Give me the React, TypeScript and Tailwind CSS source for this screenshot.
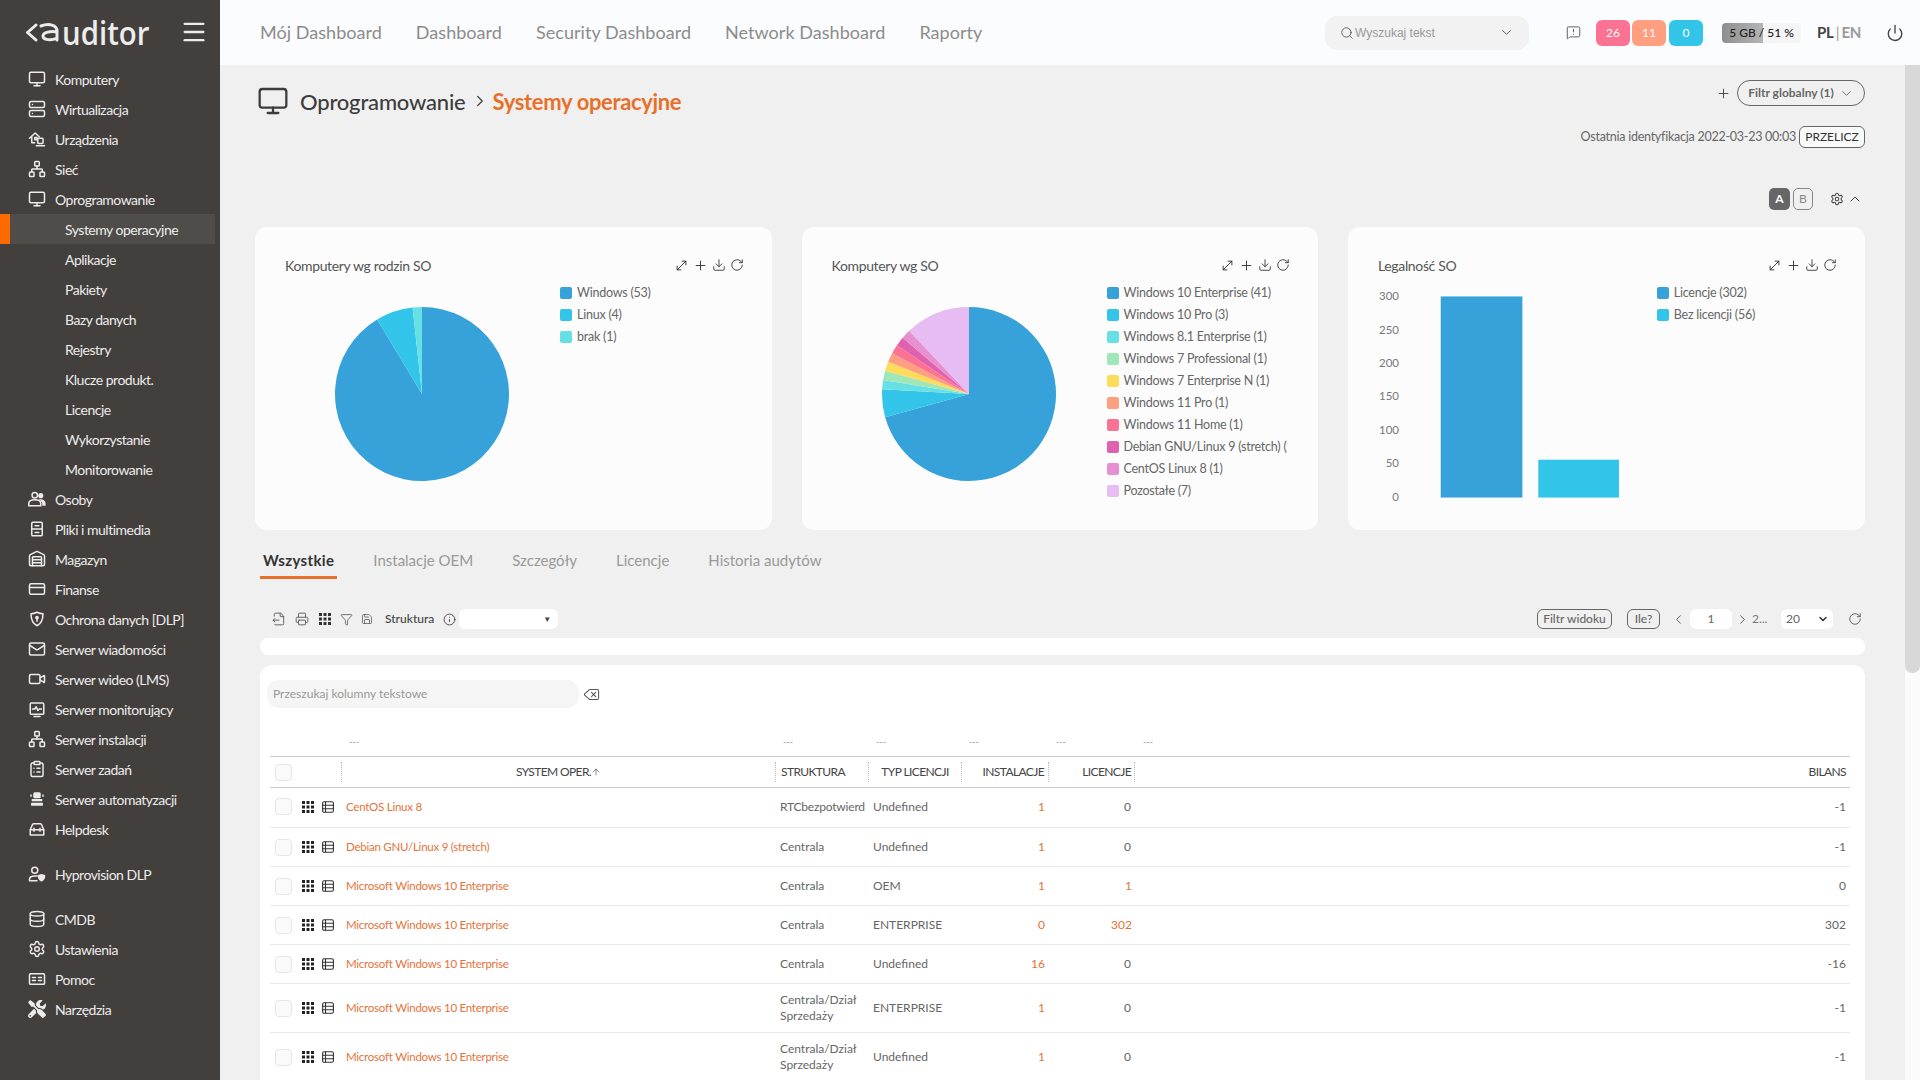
import React from "react";
import {
  Monitor, Server, Network, Warehouse, CreditCard, Mail, Video, ClipboardList, Database, Settings,
  Search, ChevronDown, ChevronUp, ChevronLeft, ChevronRight, Plus, Power, MessageSquareWarning,
  MoveDiagonal, Download, RotateCw, FileOutput, Printer, Funnel, Save, Info, Delete, ArrowUp, Menu,
} from "lucide-react";
import { FaTools } from "react-icons/fa";

type P = { className?: string };
const base = { viewBox: "0 0 24 24", fill: "none", stroke: "currentColor", strokeWidth: 2, strokeLinecap: "round" as const, strokeLinejoin: "round" as const };

const HouseDev = ({ className }: P) => (
  <svg {...base} className={className}><path d="M2 11 9.5 4 15 9" /><path d="M5 9v8h4" /><path d="M9 10h3v3H9z" /><rect x="13" y="11" width="7" height="7" rx="1" /><path d="M11 21h11" /></svg>
);
const Users = ({ className }: P) => (
  <svg viewBox="0 0 24 24" className={className} fill="currentColor"><circle cx="9" cy="7" r="3.6" fill="none" stroke="currentColor" strokeWidth="2" /><circle cx="17" cy="7.5" r="3.4" /><path d="M1 21v-3c0-3 3-5 8-5s8 2 8 5v3z" fill="none" stroke="currentColor" strokeWidth="2" /><path d="M14 12.5c5-1 9 1 9.5 5V21H19v-3c0-2-2-4-5-5.500z" /></svg>
);
const Cabinet = ({ className }: P) => (
  <svg {...base} className={className}><rect x="5" y="3" width="14" height="18" rx="1.500" /><path d="M5 12h14M9.500 7.500h5M9.500 16.500h5" /></svg>
);
const Shield = ({ className }: P) => (
  <svg {...base} className={className}><path d="M12 3c3 1.500 5 2 8 2 0 8-2 13-8 16-6-3-8-8-8-16 3 0 5-.5 8-2z" /><circle cx="12" cy="10" r="1.500" fill="currentColor" /><path d="M12 11v4" /></svg>
);
const MonPulse = ({ className }: P) => (
  <svg {...base} className={className}><rect x="3" y="4" width="18" height="15" rx="1.500" /><path d="M6 12h3l2-3 2 5 2-2h3" /><path d="M8 22h8" /></svg>
);
const Bot = ({ className }: P) => (
  <svg viewBox="0 0 24 24" className={className} fill="currentColor"><rect x="7" y="3" width="10" height="8" rx="2" /><rect x="5" y="12" width="14" height="3" /><rect x="4" y="17" width="16" height="4" rx="1" /><rect x="3" y="6" width="2" height="3" /><rect x="19" y="6" width="2" height="3" /></svg>
);
const Help = ({ className }: P) => (
  <svg {...base} className={className}><path d="M3 20v-7l3-7c.3-.7 1-1 2-1h8c1 0 1.700.3 2 1l3 7v7z" /><path d="M3 13h18M8 11v4M16 11v4" /></svg>
);
const UserShield = ({ className }: P) => (
  <svg {...base} className={className}><circle cx="9" cy="7" r="4" /><path d="M2 21v-2c0-3 3-4.500 7-4.500 1 0 2 .1 3 .3M2 21h10" /><path d="M18 13c1.500.8 2.500 1 4 1 0 3.500-1.500 6-4 7-2.500-1-4-3.500-4-7 1.500 0 2.500-.2 4-1z" fill="currentColor" /></svg>
);
const Panel = ({ className }: P) => (
  <svg {...base} className={className}><rect x="2" y="5" width="20" height="14" rx="1.500" /><path d="M6 10h4M6 14h4M14 10h4M14 14h4" /></svg>
);
const Tools = ({ className }: P) => <FaTools className={className} />;

const GridDots = ({ className }: P) => (
  <svg viewBox="0 0 12 12" className={className} fill="currentColor">
    {[0, 4.500, 9].map((x) => [0, 4.500, 9].map((y) => <rect key={`${x}-${y}`} x={x} y={y} width="3" height="3" />))}
  </svg>
);
const ListBox = ({ className }: P) => (
  <svg viewBox="0 0 12 12" className={className} fill="none" stroke="currentColor" strokeWidth="1.100"><rect x=".6" y=".8" width="10.800" height="10.400" rx="1.500" /><path d="M.6 4.200h10.800M.6 7.700h10.800M3.500 .8v10.400" /></svg>
);

const menuTop: [React.ComponentType<P>, string][] = [
  [Monitor, "Komputery"], [Server, "Wirtualizacja"], [HouseDev, "Urządzenia"], [Network, "Sieć"], [Monitor, "Oprogramowanie"],
];
const sub = ["Systemy operacyjne", "Aplikacje", "Pakiety", "Bazy danych", "Rejestry", "Klucze produkt.", "Licencje", "Wykorzystanie", "Monitorowanie"];
const menuMid: [React.ComponentType<P>, string][] = [
  [Users, "Osoby"], [Cabinet, "Pliki i multimedia"], [Warehouse, "Magazyn"], [CreditCard, "Finanse"], [Shield, "Ochrona danych [DLP]"],
  [Mail, "Serwer wiadomości"], [Video, "Serwer wideo (LMS)"], [MonPulse, "Serwer monitorujący"], [Network, "Serwer instalacji"],
  [ClipboardList, "Serwer zadań"], [Bot, "Serwer automatyzacji"], [Help, "Helpdesk"],
];
const menuEnd: [React.ComponentType<P>, string][] = [
  [Database, "CMDB"], [Settings, "Ustawienia"], [Panel, "Pomoc"], [Tools, "Narzędzia"],
];

function Item({ icon: I, label }: { icon: React.ComponentType<P>; label: string }) {
  return (
    <div className="flex h-[30px] items-center pl-[28px] text-[14px] tracking-[-0.5px] text-[#ececec]">
      <I className="h-[18px] w-[18px] shrink-0" />
      <span className="ml-[9px]">{label}</span>
    </div>
  );
}

function Sidebar() {
  return (
    <aside className="flex w-[220px] shrink-0 flex-col bg-[#433f3c]">
      <div className="flex h-[64px] items-center pl-[25px] pr-[12px]">
        <svg viewBox="0 0 34 19" className="h-[19px] w-[34px] text-[#ececec]" fill="none" stroke="currentColor" strokeWidth="3" strokeLinecap="round" strokeLinejoin="round">
          <path d="M11 2 2.500 9.500 11 17" />
          <path d="M16 3C24 0 32 2 32 8V17M32 9C26 8 18 9 18 13C18 17 26 18 32 15" />
        </svg>
        <span className="ml-[3px] block w-[88px] origin-left scale-x-[0.89] whitespace-nowrap text-[33px] font-semibold leading-none text-[#ececec] [font-family:'Open_Sans',Lato,sans-serif]">uditor</span>
        <Menu className="ml-auto h-[28px] w-[28px] text-[#ececec]" strokeWidth={2} />
      </div>
      <nav>
        {menuTop.map(([i, l]) => <Item key={l} icon={i} label={l} />)}
        {sub.map((s, idx) => (
          <div key={s} className={idx === 0 ? "flex h-[30px] w-[215px] items-center border-l-[10px] border-[#ff6a00] bg-[#504c49] pl-[55px] text-[14px] tracking-[-0.5px] text-[#ececec]" : "flex h-[30px] items-center pl-[65px] text-[14px] tracking-[-0.5px] text-[#ececec]"}>{s}</div>
        ))}
        {menuMid.map(([i, l]) => <Item key={l} icon={i} label={l} />)}
        <div className="mt-[15px]"><Item icon={UserShield} label="Hyprovision DLP" /></div>
        <div className="mt-[15px]">{menuEnd.map(([i, l]) => <Item key={l} icon={i} label={l} />)}</div>
      </nav>
    </aside>
  );
}

function TopBar() {
  return (
    <header className="flex h-[65px] shrink-0 items-center bg-[#fbfcfd] pl-[40px] pr-[16px]">
      <nav className="flex gap-[34px] text-[18px] tracking-[0.04px] text-[#8c8c8c]">
        <span>Mój Dashboard</span><span>Dashboard</span><span>Security Dashboard</span><span>Network Dashboard</span><span>Raporty</span>
      </nav>
      <div className="ml-auto flex h-[34px] w-[204px] items-center rounded-[12px] bg-[#f2f2f2] pl-[15px] pr-[15px]">
        <Search className="h-[14px] w-[14px] text-[#555]" strokeWidth={1.500} />
        <span className="ml-[1px] text-[12px] text-[#999] [font-family:'Liberation_Sans',sans-serif]">Wyszukaj tekst</span>
        <ChevronDown className="ml-auto h-[15px] w-[15px] text-[#555]" strokeWidth={1.500} />
      </div>
      <MessageSquareWarning className="ml-[37px] h-[15px] w-[15px] text-[#555]" strokeWidth={1.500} />
      <div className="ml-[15px] flex gap-[2px] text-[12px] text-white">
        <span className="flex h-[26px] w-[34px] items-center justify-center rounded-[6px] bg-[#fb7293]">26</span>
        <span className="flex h-[26px] w-[34px] items-center justify-center rounded-[6px] bg-[#ff9f7f]">11</span>
        <span className="ml-[1px] flex h-[26px] w-[34px] items-center justify-center rounded-[6px] bg-[#32c5e9]">0</span>
      </div>
      <div className="relative ml-[19px] h-[20px] w-[79px] overflow-hidden rounded-[4px] bg-[#f5f5f5]">
        <div className="h-full w-[41px] bg-gradient-to-r from-[#8f8f8f] to-[#b5b5b5]" />
        <span className="absolute inset-0 flex items-center justify-center text-[12px] font-medium text-[#222]">5 GB / 51 %</span>
      </div>
      <div className="ml-[16px] flex w-[44px] justify-between text-[15px] font-bold tracking-[-0.3px] text-[#444]">PL<span className="font-normal text-[#999]">|</span><span className="text-[#999]">EN</span></div>
      <Power className="ml-[25px] h-[18px] w-[18px] text-[#444]" strokeWidth={1.800} />
    </header>
  );
}

const COLORS = ["#37a2da", "#32c5e9", "#67e0e3", "#9fe6b8", "#ffdb5c", "#ff9f7f", "#fb7293", "#e062ae", "#e690d1", "#e7bcf3"];

function Pie({ values }: { values: number[] }) {
  const total = values.reduce((a, b) => a + b, 0);
  const R = 87;
  let acc = 0;
  return (
    <svg width={174} height={174} viewBox="0 0 174 174">
      {values.map((v, i) => {
        const a0 = (acc / total) * 2 * Math.PI;
        acc += v;
        const a1 = (acc / total) * 2 * Math.PI;
        const p = (a: number) => `${(R + R * Math.sin(a)).toFixed(2)} ${(R - R * Math.cos(a)).toFixed(2)}`;
        return <path key={i} d={`M${R} ${R}L${p(a0)}A${R} ${R} 0 ${a1 - a0 > Math.PI ? 1 : 0} 1 ${p(a1)}Z`} fill={COLORS[i]} />;
      })}
    </svg>
  );
}

function Legend({ items }: { items: string[] }) {
  return (
    <div className="w-[181px] overflow-hidden pt-[1px]">
      {items.map((t, i) => (
        <div key={t} className="flex h-[22px] items-center whitespace-nowrap text-[12.500px] tracking-[-0.23px] text-[#666]">
          <span className="mr-[5px] h-[12px] w-[12px] shrink-0 rounded-[2px]" style={{ background: COLORS[i] }} />
          {t}
        </div>
      ))}
    </div>
  );
}

function CardIcons() {
  return (
    <div className="flex items-center gap-[4px] text-[#333]">
      <MoveDiagonal className="h-[15px] w-[15px]" strokeWidth={1.500} />
      <Plus className="h-[15px] w-[15px]" strokeWidth={1.500} />
      <Download className="h-[14px] w-[14px]" strokeWidth={1.500} />
      <RotateCw className="h-[14px] w-[14px]" strokeWidth={1.500} />
    </div>
  );
}

function Card({ title, children }: { title: string; children: React.ReactNode }) {
  return (
    <section className="h-[303px] w-[517px] rounded-[12px] bg-[#fcfcfc] pl-[30px] pr-[28px] pt-[28px]">
      <div className="flex h-[20px] items-center justify-between">
        <h3 className="text-[14px] tracking-[-0.35px] text-[#555]">{title}</h3>
        <CardIcons />
      </div>
      <div className="mt-[6px] flex">{children}</div>
    </section>
  );
}

function Bars() {
  const labels = ["300", "250", "200", "150", "100", "50", "0"];
  return (
    <svg width={280} height={230} viewBox="0 0 280 230">
      {labels.map((l, i) => (
        <text key={l} x={21} y={19 + i * 33.5} textAnchor="end" fontSize="11.500" fill="#777" fontFamily="Lato">{l}</text>
      ))}
      <rect x={63} y={15} width={82} height={202} fill="#37a2da" />
      <rect x={161} y={179} width={81} height={38} fill="#32c5e9" />
    </svg>
  );
}

const rows = [
  ["CentOS Linux 8", "RTCbezpotwierdzony", "Undefined", "1", "0", "-1", 40],
  ["Debian GNU/Linux 9 (stretch)", "Centrala", "Undefined", "1", "0", "-1", 39],
  ["Microsoft Windows 10 Enterprise", "Centrala", "OEM", "1", "1", "0", 39],
  ["Microsoft Windows 10 Enterprise", "Centrala", "ENTERPRISE", "0", "302", "302", 39],
  ["Microsoft Windows 10 Enterprise", "Centrala", "Undefined", "16", "0", "-16", 39],
  ["Microsoft Windows 10 Enterprise", "Centrala/Dział Sprzedaży", "ENTERPRISE", "1", "0", "-1", 49],
  ["Microsoft Windows 10 Enterprise", "Centrala/Dział Sprzedaży", "Undefined", "1", "0", "-1", 49],
] as const;

const cols = "grid grid-cols-[71px_434px_93px_93px_87px_87px_1fr]";
const Check = () => <span className="ml-[5px] block h-[17px] w-[17px] rounded-[4px] border border-[#e6e6e6] bg-[#fafafa]" />;

function Table() {
  return (
    <div className="ml-[10px] mr-[15px] text-[12px]">
      <div className={`${cols} h-[48px] pt-[28px] text-[9px] leading-[12px] text-[#999]`}>
        <span />
        <span className="pl-[8px]">---</span><span className="pl-[8px]">---</span><span className="pl-[8px]">---</span><span className="pl-[8px]">---</span><span className="pl-[8px]">---</span><span className="pl-[8px]">---</span>
      </div>
      <div className={`${cols} h-[32px] items-center border-y border-[#cccccc] tracking-[-0.6px] text-[#444]`}>
        <div><Check /></div>
        <div className="flex h-[20px] items-center justify-center border-l border-dotted border-[#bbb]">SYSTEM OPER.<ArrowUp className="h-[10px] w-[10px]" strokeWidth={1.500} /></div>
        <div className="flex h-[20px] items-center border-l border-dotted border-[#bbb] pl-[5px]">STRUKTURA</div>
        <div className="flex h-[20px] items-center justify-center border-l border-dotted border-[#bbb]">TYP LICENCJI</div>
        <div className="flex h-[20px] items-center justify-end border-l border-dotted border-[#bbb] pr-[4px]">INSTALACJE</div>
        <div className="flex h-[20px] items-center justify-end border-x border-dotted border-[#bbb] pr-[3px]">LICENCJE</div>
        <div className="pr-[4px] text-right">BILANS</div>
      </div>
      {rows.map((r, i) => (
        <div key={i} className={`${cols} items-center border-b border-[#e8e8e8] text-[#666] ${i === 0 ? "pb-[2px]" : ""}`} style={{ height: r[6] }}>
          <div className="flex items-center">
            <Check />
            <GridDots className="ml-[10px] h-[12px] w-[12px] text-[#222]" />
            <ListBox className="ml-[8px] h-[12px] w-[12px] text-[#333]" />
          </div>
          <div className="pl-[5px] text-[11.500px] tracking-[-0.25px] text-[#e4733a]">{r[0]}</div>
          <div className="overflow-hidden pl-[5px] pr-[3px] leading-[16px]">{r[1].startsWith("RTC") ? <span className="block w-[85px] overflow-hidden whitespace-nowrap tracking-[-0.2px]">{r[1]}</span> : r[1]}</div>
          <div className="pl-[5px]">{r[2]}</div>
          <div className="pr-[3px] text-right text-[#e4733a]">{r[3]}</div>
          <div className={r[4] === "0" ? "pr-[4px] text-right" : "pr-[3px] text-right text-[#e4733a]"}>{r[4]}</div>
          <div className="pr-[4px] text-right">{r[5]}</div>
        </div>
      ))}
    </div>
  );
}

export default function App() {
  return (
    <div className="flex h-[1080px] w-[1920px] overflow-hidden [font-family:Lato,sans-serif]">
      <Sidebar />
      <div className="flex min-w-0 flex-1 flex-col">
        <TopBar />
        <div className="flex min-h-0 flex-1">
          <main className="flex min-w-0 flex-1 flex-col bg-[#f0f0f0] pl-[35px] pr-[40px]">
            <div className="flex h-[162px] shrink-0 justify-between pt-[15px]">
              <div className="flex h-[42px] items-center pl-[2px]">
                <Monitor className="h-[32px] w-[32px] text-[#3c3c3c]" strokeWidth={1.700} />
                <span className="ml-[11px] text-[22px] font-medium tracking-[-0.2px] text-[#3c3c3c]">Oprogramowanie</span>
                <ChevronRight className="ml-[5px] mr-[4px] h-[18px] w-[18px] text-[#444]" strokeWidth={1.700} />
                <span className="text-[22px] font-bold tracking-[-0.35px] text-[#e8702a]">Systemy operacyjne</span>
              </div>
              <div className="flex flex-col items-end">
                <div className="flex h-[26px] items-center">
                  <Plus className="mr-[6px] h-[15px] w-[15px] text-[#444]" strokeWidth={1.500} />
                  <div className="flex h-[26px] w-[128px] items-center justify-center gap-[5px] rounded-[13px] border border-[#666] text-[12px] font-bold text-[#666]">Filtr globalny (1)<ChevronDown className="h-[15px] w-[15px]" strokeWidth={1.500} /></div>
                </div>
                <div className="mt-[20px] flex h-[22px] items-center">
                  <span className="mr-[3px] text-[12.500px] tracking-[-0.25px] text-[#666]">Ostatnia identyfikacja 2022-03-23 00:03</span>
                  <span className="flex h-[22px] w-[66px] items-center justify-center rounded-[6px] border border-[#666] bg-[#fafafa] text-[12px] text-[#333]">PRZELICZ</span>
                </div>
                <div className="mt-[40px] flex h-[22px] items-center pr-[2px]">
                  <span className="flex h-[22px] w-[21px] items-center justify-center rounded-[5px] bg-[#666] text-[12px] font-bold text-white">A</span>
                  <span className="ml-[3px] flex h-[22px] w-[20px] items-center justify-center rounded-[5px] border border-[#888] text-[12px] text-[#888]">B</span>
                  <Settings className="ml-[17px] h-[14px] w-[14px] text-[#444]" strokeWidth={1.800} />
                  <ChevronUp className="ml-[3px] h-[16px] w-[16px] text-[#444]" strokeWidth={1.500} />
                </div>
              </div>
            </div>

            <div className="flex shrink-0 gap-[30px]">
              <Card title="Komputery wg rodzin SO">
                <div className="w-[275px] pl-[50px] pt-[26px]"><Pie values={[53, 4, 1]} /></div>
                <Legend items={["Windows (53)", "Linux (4)", "brak (1)"]} />
              </Card>
              <Card title="Komputery wg SO">
                <div className="w-[275px] pl-[50px] pt-[26px]"><Pie values={[41, 3, 1, 1, 1, 1, 1, 1, 1, 7]} /></div>
                <Legend items={["Windows 10 Enterprise (41)", "Windows 10 Pro (3)", "Windows 8.1 Enterprise (1)", "Windows 7 Professional (1)", "Windows 7 Enterprise N (1)", "Windows 11 Pro (1)", "Windows 11 Home (1)", "Debian GNU/Linux 9 (stretch) (1)", "CentOS Linux 8 (1)", "Pozostałe (7)"]} />
              </Card>
              <Card title="Legalność SO">
                <Bars />
                <Legend items={["Licencje (302)", "Bez licencji (56)"]} />
              </Card>
            </div>

            <div className="mt-[20px] flex h-[29px] shrink-0 gap-[39px] pl-[5px] text-[15px] leading-[20px] text-[#999]">
              <span className="mr-[-3px] border-b-[3px] border-[#e8702a] px-[3px] font-bold tracking-[0.35px] text-[#333]">Wszystkie</span>
              <span>Instalacje OEM</span><span>Szczegóły</span><span>Licencje</span><span>Historia audytów</span>
            </div>

            <div className="mt-[30px] flex h-[20px] shrink-0 items-center pl-[17px] text-[#555]">
              <FileOutput className="h-[14px] w-[14px]" strokeWidth={1.500} />
              <Printer className="ml-[9px] h-[14px] w-[14px]" strokeWidth={1.500} />
              <GridDots className="ml-[10px] h-[12px] w-[12px] text-[#333]" />
              <Funnel className="ml-[9px] h-[13px] w-[13px]" strokeWidth={1.500} />
              <Save className="ml-[8px] h-[12px] w-[12px]" strokeWidth={1.500} />
              <span className="ml-[12px] text-[12px] font-medium text-[#444]">Struktura</span>
              <Info className="ml-[9px] h-[13px] w-[13px] text-[#333]" strokeWidth={1.500} />
              <div className="ml-[3px] flex h-[20px] w-[99px] items-center justify-end rounded-[6px] bg-white pr-[7px] text-[8px] text-[#444]">▼</div>
              <span className="ml-auto flex h-[20px] w-[75px] items-center justify-center rounded-[6px] border border-[#666] text-[12px] font-medium text-[#666]">Filtr widoku</span>
              <span className="ml-[15px] flex h-[20px] w-[33px] items-center justify-center rounded-[6px] border border-[#666] text-[12px] font-medium text-[#666]">Ile?</span>
              <ChevronLeft className="ml-[11px] h-[15px] w-[15px]" strokeWidth={1.500} />
              <span className="ml-[4px] flex h-[20px] w-[42px] items-center justify-center rounded-[6px] bg-white text-[12px] text-[#666]">1</span>
              <ChevronRight className="ml-[3px] h-[15px] w-[15px]" strokeWidth={1.500} />
              <span className="ml-[2px] w-[15px] text-[12px] text-[#777]">2...</span>
              <div className="ml-[14px] flex h-[20px] w-[52px] items-center justify-between rounded-[6px] bg-white pl-[5px] pr-[4px] text-[12px] text-[#666]">20<ChevronDown className="h-[12px] w-[12px] text-[#333]" strokeWidth={3} /></div>
              <RotateCw className="ml-[15px] mr-[3px] h-[14px] w-[14px]" strokeWidth={1.500} />
            </div>

            <div className="ml-[5px] mt-[9px] h-[17px] shrink-0 rounded-[8px] bg-white" />

            <div className="ml-[5px] mt-[10px] min-h-0 flex-1 overflow-hidden rounded-t-[12px] bg-white">
              <div className="flex items-center pl-[7px] pt-[15px]">
                <div className="flex h-[28px] w-[312px] items-center rounded-[12px] bg-[#f5f5f5] pl-[6px] text-[12px] text-[#999]">Przeszukaj kolumny tekstowe</div>
                <Delete className="ml-[4px] h-[17px] w-[17px] text-[#555]" strokeWidth={1.500} />
              </div>
              <Table />
            </div>
          </main>
          <div className="w-[15px] shrink-0 bg-[#fbfbfb]">
            <div className="h-[608px] rounded-b-[7px] bg-[#d8d8d8]" />
          </div>
        </div>
      </div>
    </div>
  );
}
